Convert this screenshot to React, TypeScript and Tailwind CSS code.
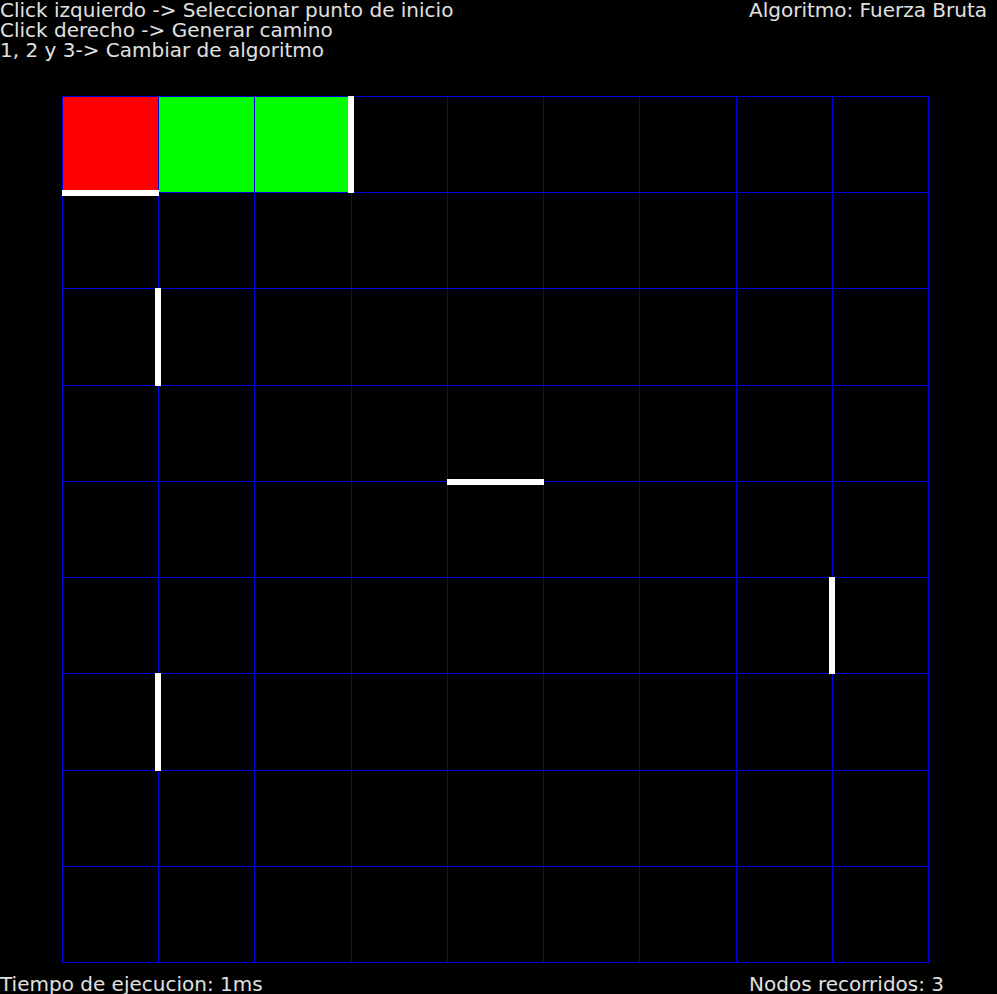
type Segment = { x1: number; y1: number; x2: number; y2: number };

const COUNT = 9;
const EXTENT = 867;
const PITCH = (EXTENT - 1) / COUNT;

const at = (n: number) => Math.round(n * PITCH);

const lines = Array.from({ length: COUNT + 1 }, (_, i) => i);

const visited = [
  { col: 0, row: 0, color: "#ff0000" },
  { col: 1, row: 0, color: "#00ff00" },
  { col: 2, row: 0, color: "#00ff00" },
];

const walls: Segment[] = [
  { x1: 3, y1: 0, x2: 3, y2: 1 },
  { x1: 0, y1: 1, x2: 1, y2: 1 },
  { x1: 1, y1: 2, x2: 1, y2: 3 },
  { x1: 4, y1: 4, x2: 5, y2: 4 },
  { x1: 8, y1: 5, x2: 8, y2: 6 },
  { x1: 1, y1: 6, x2: 1, y2: 7 },
];

function Board() {
  return (
    <svg
      viewBox={`0 0 ${EXTENT} ${EXTENT}`}
      className="block w-full overflow-visible"
      role="img"
      aria-label="Laberinto"
    >
      {visited.map(({ col, row, color }) => (
        <rect
          key={`${col}-${row}`}
          x={at(col)}
          y={at(row)}
          width={at(col + 1) - at(col)}
          height={at(row + 1) - at(row)}
          fill={color}
        />
      ))}
      <g fill="#0000e0">
        {lines.map((i) => (
          <rect key={`v${i}`} x={at(i)} y={0} width={1} height={EXTENT} />
        ))}
        {lines.map((i) => (
          <rect key={`h${i}`} x={0} y={at(i)} width={EXTENT} height={1} />
        ))}
      </g>
      <g fill="#ffffff">
        {walls.map(({ x1, y1, x2, y2 }) =>
          x1 === x2 ? (
            <rect key={`${x1}-${y1}`} x={at(x1) - 3} y={at(y1)} width={6} height={at(y2) - at(y1) + 1} />
          ) : (
            <rect key={`${x1}-${y1}`} x={at(x1)} y={at(y1) - 2} width={at(x2) - at(x1) + 1} height={6} />
          ),
        )}
      </g>
    </svg>
  );
}

export default function App() {
  return (
    <div className="flex min-h-screen flex-col overflow-hidden bg-black font-['DejaVu_Sans',Verdana,sans-serif] text-[20px] leading-5 text-[#e0e0e0]">
      <header className="flex justify-between">
        <div>
          <p>Click izquierdo -&gt; Seleccionar punto de inicio</p>
          <p>Click derecho -&gt; Generar camino</p>
          <p>1, 2 y 3-&gt; Cambiar de algoritmo</p>
        </div>
        <p className="w-62 whitespace-nowrap">Algoritmo: Fuerza Bruta</p>
      </header>
      <main className="mt-9 pr-17 pl-[62px]">
        <Board />
      </main>
      <footer className="mt-auto flex justify-between">
        <p>Tiempo de ejecucion: 1ms</p>
        <p className="w-62 whitespace-nowrap">Nodos recorridos: 3</p>
      </footer>
    </div>
  );
}
